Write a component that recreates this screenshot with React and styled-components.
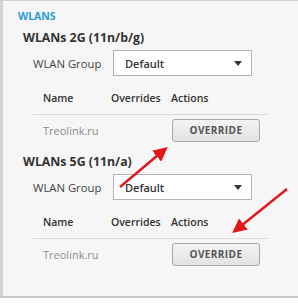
import React from 'react'
import styled, { createGlobalStyle } from 'styled-components'

const GlobalStyle = createGlobalStyle`
  html, body {
    margin: 0;
    padding: 0;
    background: #ffffff;
  }
  body {
    font-family: "Open Sans", "Liberation Sans", sans-serif;
    overflow: hidden;
  }
`

const sections = [
  { title: 'WLANs 2G (11n/b/g)', name: 'Treolink.ru' },
  { title: 'WLANs 5G (11n/a)', name: 'Treolink.ru' },
]

function App() {
  return (
    <>
      <GlobalStyle />
      <Page>
        <Panel>
          <PanelTitle>WLANS</PanelTitle>
          {sections.map((s, i) => (
            <Section key={i} $first={i === 0}>
              <SectionTitle>{s.title}</SectionTitle>
              <FormRow>
                <Label>WLAN Group</Label>
                <Select>
                  <span>Default</span>
                  <Caret />
                </Select>
              </FormRow>
              <Table>
                <HeadRow>
                  <Cell>Name</Cell>
                  <Cell>Overrides</Cell>
                  <Cell>Actions</Cell>
                </HeadRow>
                <BodyRow>
                  <NameCell>{s.name}</NameCell>
                  <Cell />
                  <Cell>
                    <Button>OVERRIDE</Button>
                  </Cell>
                </BodyRow>
              </Table>
            </Section>
          ))}
        </Panel>
        <Arrows width="298" height="303" viewBox="0 0 298 303">
          <defs>
            <marker
              id="head"
              markerWidth="6"
              markerHeight="6"
              refX="4"
              refY="3"
              orient="auto"
              markerUnits="strokeWidth"
            >
              <path d="M0,0 L6,3 L0,6 z" fill="#e3161b" />
            </marker>
          </defs>
          <line x1="120" y1="187" x2="164" y2="150" stroke="#e3161b" strokeWidth="2.4" markerEnd="url(#head)" />
          <line x1="287" y1="189" x2="236" y2="230" stroke="#e3161b" strokeWidth="2.4" markerEnd="url(#head)" />
        </Arrows>
      </Page>
    </>
  )
}

export default App

const Page = styled.div`
  position: relative;
  width: 298px;
  height: 303px;
`

const Panel = styled.div`
  box-sizing: border-box;
  width: 298px;
  height: 298px;
  background: #f6f6f6;
  border-top: 1px solid #d2d2d2;
  border-left: 3px solid #d2d2d2;
  border-bottom: 2px solid #c8c8c8;
  padding: 8px 0 0 15px;
`

const PanelTitle = styled.div`
  font-size: 10.5px;
  font-weight: 700;
  line-height: 14px;
  color: #2a9ad8;
`

const Section = styled.div`
  padding-left: 5px;
  margin-top: ${(p) => (p.$first ? '6px' : '8px')};
`

const SectionTitle = styled.div`
  font-size: 12.3px;
  font-weight: 700;
  line-height: 18px;
  color: #333;
`

const FormRow = styled.div`
  display: flex;
  align-items: center;
  margin-top: 3px;
  padding-left: 10px;
`

const Label = styled.div`
  width: 80px;
  font-size: 11.3px;
  color: #444;
`

const Select = styled.div`
  box-sizing: border-box;
  width: 139px;
  height: 26px;
  border: 1px solid #b4b4b4;
  background: #fff;
  display: flex;
  align-items: center;
  justify-content: space-between;
  padding: 0 9px 0 11px;
  font-size: 11px;
  font-weight: 600;
  color: #333;
`

const Caret = styled.span`
  width: 0;
  height: 0;
  border-left: 4px solid transparent;
  border-right: 4px solid transparent;
  border-top: 5px solid #333;
`

const Table = styled.div`
  margin: 6px 0 0 10px;
  width: 235px;
`

const HeadRow = styled.div`
  display: grid;
  grid-template-columns: 68px 60px 1fr;
  height: 32px;
  align-items: center;
  border-bottom: 1px solid #dcdcdc;
  font-size: 10.5px;
  font-weight: 600;
  color: #333;
`

const BodyRow = styled.div`
  display: grid;
  grid-template-columns: 68px 60px 1fr;
  height: 30px;
  align-items: center;
  font-size: 11px;
  color: #333;
`

const Cell = styled.div`
  padding-left: 10px;
  white-space: nowrap;
`

const NameCell = styled(Cell)`
  color: #8c8c8c;
  padding-top: 1px;
`

const Button = styled.button`
  box-sizing: border-box;
  width: 88px;
  height: 23px;
  margin-left: 1px;
  border: 1px solid #a8a8a8;
  border-radius: 3px;
  background: linear-gradient(#f4f4f4, #e2e2e2);
  font-family: "Open Sans", "Liberation Sans", sans-serif;
  font-size: 10px;
  font-weight: 700;
  letter-spacing: 0.4px;
  color: #555;
  padding: 0;
`

const Arrows = styled.svg`
  position: absolute;
  left: 0;
  top: 0;
  pointer-events: none;
`
